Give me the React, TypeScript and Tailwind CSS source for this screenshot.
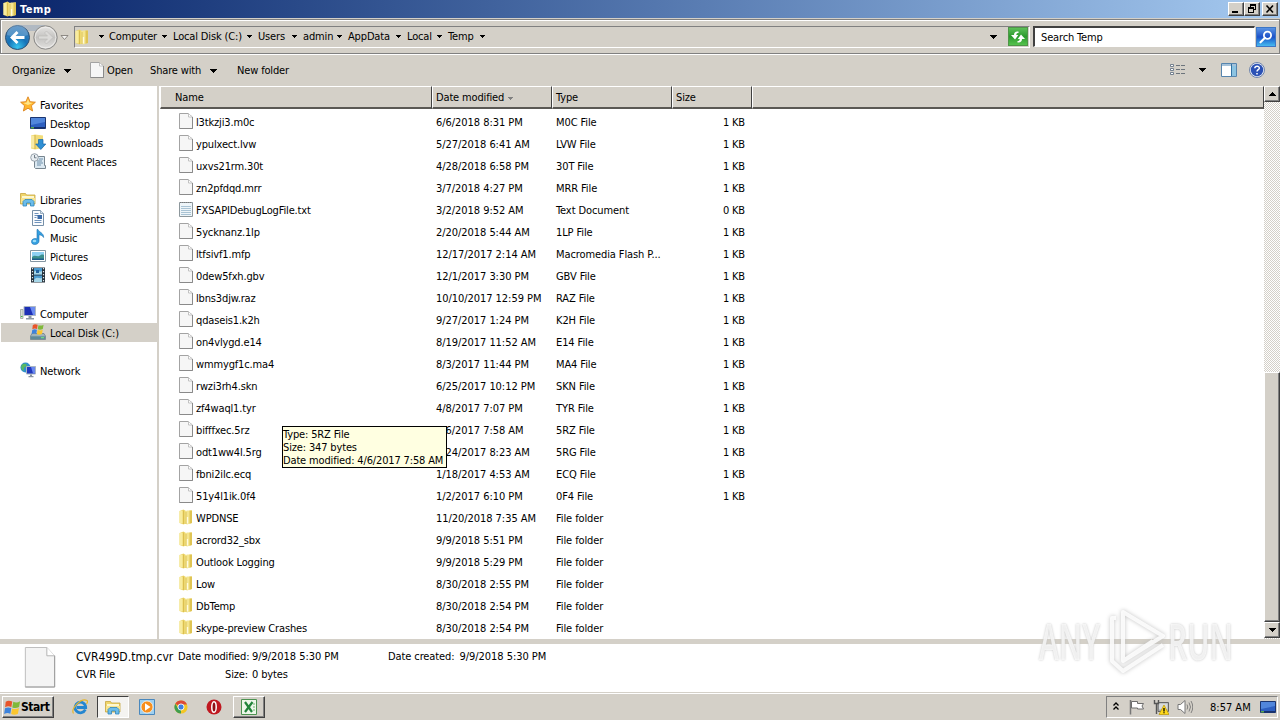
import React from "react";

type IconProps = { className?: string };

const FileIcon = ({ className = "w-4 h-4" }: IconProps) => (
  <svg viewBox="0 0 16 16" className={className}>
    <path d="M1.500.5h8.500L14.500 4v11.500H1.500z" fill="#f6f6f6" stroke="#a3a3a3" />
    <path d="M14.500 4v11.500H1.500" fill="none" stroke="#8a8a8a" />
    <path d="M10.500.8V4h3.500" fill="#fff" stroke="#b5b5b5" strokeWidth=".8" />
  </svg>
);

const TextIcon = () => (
  <svg viewBox="0 0 16 16" className="w-4 h-4">
    <path d="M1.500 1.500h13v14H1.500z" fill="#eef5f9" stroke="#8d979c" />
    <path d="M2 1.500h12" stroke="#777" strokeDasharray="1 1" />
    <path d="M3 5.500h10M3 7.500h10M3 9.500h10M3 11.500h10M3 13.500h10" stroke="#a9c3d4" />
  </svg>
);

const FolderIcon = ({ className = "w-4 h-4" }: IconProps) => (
  <svg viewBox="0 0 16 16" className={className}>
    <path d="M1.500 2 5.500.5 8 2v12.500L5.500 15.500 1.500 14z" fill="#eed86f" />
    <path d="M1.500 2h3v12h-3z" fill="#f8ec9f" />
    <path d="M7 2.500 9 1.500h5V14l-5 1.500-2-1z" fill="#f4e58f" />
    <path d="M11.500 1.500H14V14l-2.500.8z" fill="#dfc454" />
    <path d="M8 3v12M5.500 1.500v13.500" stroke="#d3b544" strokeWidth=".7" />
    <path d="M9.500 8v6.500" stroke="#fffbe0" strokeWidth="1.300" />
  </svg>
);

const StarIcon = () => (
  <svg viewBox="0 0 16 16" className="w-4 h-4">
    <path d="m8 .8 2.100 4.900 5.300.5-4 3.500 1.200 5.300L8 12.200 3.400 15l1.200-5.300-4-3.500 5.300-.5z" fill="#ffb62e" stroke="#dc8420" strokeWidth=".9" />
    <path d="m8 3 1.300 3.600 3.400.4L8 9 3.300 7l3.400-.4z" fill="#ffe68a" />
  </svg>
);

const DesktopIcon = () => (
  <svg viewBox="0 0 16 16" className="w-4 h-4">
    <path d="M.5 2.500h15v11H.5z" fill="#2d5fc0" stroke="#1b3570" />
    <path d="M1 3h14v4L1 10z" fill="#5d93e4" opacity=".75" />
    <path d="M1 12h14v1.500H1z" fill="#17306c" />
    <path d="M1 12h3v1.500H1z" fill="#5aa84d" />
  </svg>
);

const DownloadsIcon = () => (
  <svg viewBox="0 0 16 16" className="w-4 h-4">
    <path d="M1 1.500 5 .5l8 1V14l-8 1.500-4-1z" fill="#f1dc7a" />
    <path d="M1 2h3.500v12L1 13.500z" fill="#f9eba5" />
    <path d="M5 1v14" stroke="#caa73b" strokeWidth=".8" />
    <path d="M8.500 5.500h4.500V10h2.800L10.800 15.500 5.700 10h2.800z" fill="#2e8fd4" stroke="#1566a8" strokeWidth=".7" />
  </svg>
);

const RecentIcon = () => (
  <svg viewBox="0 0 16 16" className="w-4 h-4">
    <path d="M4.500 3.500h10v9h1v3h-10l-1-1z" fill="#dbe8f1" stroke="#77858f" />
    <path d="M9 6h4M7 8h5M7 10h6M7 12h4" stroke="#6e90ab" />
    <circle cx="4.500" cy="4.500" r="3.800" fill="#e9eef2" stroke="#8d99a3" strokeWidth=".9" />
    <path d="M4.500 2v2.800h2" fill="none" stroke="#53616c" strokeWidth=".8" />
  </svg>
);

const LibraryIcon = () => (
  <svg viewBox="0 0 16 16" className="w-4 h-4">
    <path d="M.5 2.500h5l1 1.500h8.500v9H.5z" fill="#efd56c" stroke="#c7a53d" strokeWidth=".8" />
    <path d="M2 5h12v2H2z" fill="#fdf7d0" />
    <path d="M1 7h14v5H1z" fill="#f7e48f" />
    <path d="M3 15v-4.500L5 8.500h7l2 2V15h-3.500v-3h-4v3z" fill="#6bbcea" stroke="#2f85bd" strokeWidth=".8" />
  </svg>
);

const DocumentIcon = () => (
  <svg viewBox="0 0 16 16" className="w-4 h-4">
    <path d="M2.500.5h8l3 3v12h-11z" fill="#fafcfe" stroke="#7790a8" />
    <path d="M10.500.5v3h3" fill="#dbe6ef" stroke="#7790a8" strokeWidth=".7" />
    <path d="M4.500 3.500h4M4.500 5.500h4M4.500 10.500h7M4.500 12.500h7" stroke="#6f93bc" />
    <path d="M7.500 5h4.500v4H7.500z" fill="#3b6ba8" />
    <path d="M4.500 7.500h2" stroke="#6f93bc" />
  </svg>
);

const MusicIcon = () => (
  <svg viewBox="0 0 16 16" className="w-4 h-4">
    <path d="M8 .5c.8 2.600 6 3.500 5.600 8-1-2-3-2.500-4.600-2.800V12c0 2-1.800 3.500-4.200 3.500S1.500 14.300 1.500 12.500 3 9.600 5 9.600c.9 0 1.500.1 2 .3V.5z" fill="#35a0e0" stroke="#1b6fb0" strokeWidth=".6" />
    <ellipse cx="4.500" cy="12" rx="1.800" ry="1.200" fill="#9bdcf8" />
  </svg>
);

const PicturesIcon = () => (
  <svg viewBox="0 0 16 16" className="w-4 h-4">
    <path d="M.5 2.500h15v11H.5z" fill="#fff" stroke="#8596a2" />
    <path d="M2 4h12v8H2z" fill="#8ed0f2" />
    <path d="M2 9c3-3 5 0 7-1s3-2 5-1v5H2z" fill="#3c8f8c" />
    <path d="M2 10.500h12V12H2z" fill="#1d5c8c" />
  </svg>
);

const VideosIcon = () => (
  <svg viewBox="0 0 16 16" className="w-4 h-4">
    <path d="M1 .5h14v15H1z" fill="#26323c" />
    <path d="M4 1h8v6.500H4zM4 8.500h8V15H4z" fill="#4b9bd0" />
    <path d="M4 5c3-3 5 1 8-1v3.500H4zM4 13c3-4 5-1 8-2v4H4z" fill="#a6d6e8" />
    <path d="M6 3h3v3H6z" fill="#2263a0" />
    <path d="M2.500 1v14M13.500 1v14" stroke="#dfe7ec" strokeWidth="1.200" strokeDasharray="1.200 1.800" />
  </svg>
);

const ComputerIcon = () => (
  <svg viewBox="0 0 16 16" className="w-4 h-4">
    <path d="M.5 4.500h2.500v9H.5z" fill="#d5dcd6" stroke="#9ba39e" strokeWidth=".8" />
    <path d="M1 11.500h1.500" stroke="#3eb73e" />
    <path d="M4 1.500h11.500v9H4z" fill="#1c2fb5" stroke="#aeb8c3" />
    <path d="M10 2h5v8h-2z" fill="#6a8af0" />
    <path d="M8.500 11h3v2h-3zM6 13h8v1.500H6z" fill="#8b97a4" />
  </svg>
);

const Flag = () => (
  <>
    <path d="M1.500 2.500C3.500 1 5 1.400 7.300 2.200L6.500 7C4.500 6.200 3 6 1 7.300z" fill="#e8542a" />
    <path d="M8.200 2.500c2 .8 4 .7 6-.5l-.9 5c-2 1.200-4 1.200-6 .4z" fill="#80b93a" />
    <path d="M.9 8.200c2-1.200 3.500-1 5.500-.3l-.8 4.900c-2-.9-3.500-.8-5.500.4z" fill="#3d83dc" />
    <path d="M7.200 8.300c2 .8 4 .8 6-.4l-.9 5c-2 1.100-4 1.100-6 .3z" fill="#fbc62e" />
  </>
);

const DiskIcon = () => (
  <svg viewBox="0 0 16 16" className="w-4 h-4">
    <path d="M2 9.500h12l1.500 2.500v3.500H.5V12z" fill="#9fb3bb" stroke="#5b6f78" strokeWidth=".6" />
    <path d="M.8 12.300h14.400v2.900H.8z" fill="#5f8a98" />
    <path d="M11 13.700h3" stroke="#73f07a" />
    <g transform="translate(1.500 -1) scale(.85)"><Flag /></g>
  </svg>
);

const NetworkIcon = () => (
  <svg viewBox="0 0 16 16" className="w-4 h-4">
    <circle cx="5.500" cy="5.500" r="5" fill="#2f8fcc" />
    <path d="M2 2.500c2-1 4-1 5 .5L5.500 5 4 5.500 3.500 9C1 7.500.5 4.500 2 2.500z" fill="#58b961" />
    <path d="M6.500 4.500h9v7.500h-9z" fill="#2138bd" stroke="#a9b5c2" />
    <path d="M11 5h4v6.500h-2z" fill="#6887ef" />
    <path d="M10 12.500h2v1.500h-2zM8.500 14h5v1.300h-5z" fill="#8793a0" />
  </svg>
);

const Caret = ({ className = "w-[7px] h-1" }: IconProps) => (
  <svg viewBox="0 0 7 4" className={className} shapeRendering="crispEdges">
    <path d="M0 0h7L3.500 4z" fill="currentColor" />
  </svg>
);

const SmallCaret = () => (
  <svg viewBox="0 0 5 3" className="w-[5px] h-[3px]" shapeRendering="crispEdges">
    <path d="M0 0h5v1H0zM1 1h3v1H1zM2 2h1v1H2z" fill="#000" />
  </svg>
);

const raised =
  "bg-[#d4d0c8] border border-t-white border-l-white border-r-[#404040] border-b-[#404040] shadow-[inset_-1px_-1px_0_#808080]";

function TitleBar() {
  const btn = `${raised} flex h-[14px] w-4 items-center justify-center`;
  return (
    <header className="flex h-[18px] shrink-0 items-center bg-linear-to-r from-[#0a246a] to-[#a6caf0] pl-[2px] pr-[2px]">
      <FolderIcon className="h-4 w-4" />
      <span className="ml-[2px] pt-px text-[11px] font-bold tracking-[0.5px] text-white">Temp</span>
      <div className="ml-auto flex">
        <div className={btn}>
          <svg viewBox="0 0 10 10" className="size-[10px]" shapeRendering="crispEdges"><path d="M1 7h6v2H1z" /></svg>
        </div>
        <div className={btn}>
          <svg viewBox="0 0 10 10" className="size-[10px]" shapeRendering="crispEdges">
            <path d="M3 0h6v6H7V5h1V2H4v1H3zM1 3h6v6H1zM2 5v3h4V5z" fillRule="evenodd" />
          </svg>
        </div>
        <div className={`${btn} ml-[2px]`}>
          <svg viewBox="0 0 10 10" className="size-[10px]"><path d="m1.500 1.500 6.500 7M8 1.500l-6.500 7" stroke="#000" strokeWidth="1.600" /></svg>
        </div>
      </div>
    </header>
  );
}

function NavBar() {
  const crumbs: [string, string][] = [
    ["Computer", "w-16"],
    ["Local Disk (C:)", "w-[85px]"],
    ["Users", "w-[45px]"],
    ["admin", "w-[45px]"],
    ["AppData", "w-[59px]"],
    ["Local", "w-[41px]"],
    ["Temp", "w-[43px]"],
  ];
  return (
    <nav className="mt-px flex h-[35px] shrink-0 items-center border border-[#808080] pl-1 shadow-[inset_1px_1px_0_#fff,0_1px_0_#fff]">
      <svg viewBox="0 0 66 30" className="h-[30px] w-[66px] shrink-0">
        <defs>
          <radialGradient id="back" cx=".5" cy=".9" r=".9">
            <stop offset="0" stopColor="#37c4ef" />
            <stop offset=".45" stopColor="#1673b8" />
            <stop offset="1" stopColor="#4a83ba" />
          </radialGradient>
          <linearGradient id="fwd" x2="0" y2="1">
            <stop offset="0" stopColor="#e6e5e3" />
            <stop offset=".5" stopColor="#c4c3c1" />
            <stop offset="1" stopColor="#e2e1df" />
          </linearGradient>
        </defs>
        <path d="M12 3h28v6H12z" fill="#b1b9c2" />
        <circle cx="12.500" cy="15.500" r="12" fill="url(#back)" stroke="#315273" />
        <path d="M2 13a10.500 10.500 0 0 1 21 0c-7 3-14 2-21 0z" fill="#a9cce8" opacity=".35" />
        <path d="M5 15.500 11.500 9l2 2-3 3h9v3h-9l3 3-2 2z" fill="#fff" />
        <circle cx="40.500" cy="15.500" r="11.700" fill="url(#fwd)" stroke="#8a8987" />
        <circle cx="40.500" cy="15.500" r="10.300" fill="none" stroke="#f5f4f2" opacity=".7" />
        <path d="M48 15.500 41.500 9l-2 2 3 3h-9v3h9l-3 3 2 2z" fill="#dbdad8" stroke="#bab9b7" strokeWidth=".6" />
        <path d="M56 13.500h7L59.500 17.500z" fill="#f4f3f1" stroke="#77746f" strokeWidth=".8" />
      </svg>
      <div className="ml-[3px] flex h-[22px] w-[956px] items-center border border-[#808080] border-b-white border-r-white">
        <FolderIcon className="-ml-px h-4 w-4" />
        <div className="ml-[9px] flex w-[10px] justify-start"><SmallCaret /></div>
        {crumbs.map(([name, width]) => (
          <div key={name} className={`flex items-center justify-between pr-[6px] ${width}`}>
            <span>{name}</span>
            <SmallCaret />
          </div>
        ))}
        <div className="ml-auto flex items-center text-black">
          <Caret />
          <div className="ml-[11px] mr-px flex h-[19px] w-5 items-center justify-center border border-[#4f9548] bg-linear-to-b from-[#5cbf58] via-[#2b9a2d] to-[#55c24d]">
            <svg viewBox="0 0 16 14" className="h-[14px] w-4">
              <path d="M8.500 1.500C5.500 1 4 2.500 4 5H1l4 4.500L8.300 5H6.300c0-1.500.7-2 2.200-2zM7.500 12.500c3 .5 4.500-1 4.500-3.500h3l-4-4.500L7.700 9h2c0 1.500-.7 2-2.200 2z" fill="#fff" />
            </svg>
          </div>
        </div>
      </div>
      <div className="ml-[3px] flex h-[21px] w-[222px] items-center border-2 border-[#404040] border-b-white border-r-white border-b border-r bg-white pl-[6px] pt-px">
        Search Temp
      </div>
      <div className="ml-px flex h-5 w-5 items-center justify-center border border-[#3d76c4] bg-linear-to-b from-[#5a93e3] via-[#1e50c8] to-[#48b9ef]">
        <svg viewBox="0 0 16 16" className="h-4 w-4">
          <circle cx="9.500" cy="6.200" r="3.600" fill="none" stroke="#fff" strokeWidth="1.800" />
          <path d="m7 8.800-4.500 4.500" stroke="#fff" strokeWidth="2.200" strokeLinecap="round" />
        </svg>
      </div>
    </nav>
  );
}

function ToolBar() {
  return (
    <div className="flex h-[31px] shrink-0 items-center pl-3 pr-[15px]">
      <div className="flex w-[78px] items-center justify-between pr-[19px]"><span>Organize</span><Caret /></div>
      <FileIcon className="-ml-px -mt-px h-4 w-4" />
      <span className="ml-[2px] w-[43px]">Open</span>
      <div className="flex w-[87px] items-center justify-between pr-5"><span>Share with</span><Caret /></div>
      <span>New folder</span>
      <svg viewBox="0 0 16 14" className="-mt-px ml-auto h-[14px] w-4">
        <path d="M.5 1.500h3v2h-3zM.5 5.500h3v2h-3zM.5 9.500h3v2h-3z" fill="#fff" stroke="#667586" strokeWidth=".9" />
        <path d="M6 2.500h4M11 2.500h4M6 6.500h4M11 6.500h4M6 10.500h4M11 10.500h4" stroke="#6c747c" />
      </svg>
      <Caret className="-mt-px ml-[13px] h-1 w-[7px]" />
      <svg viewBox="0 0 16 14" className="-mt-px ml-[15px] h-[14px] w-4">
        <path d="M.5.5h15v13H.5z" fill="#fff" stroke="#5685ae" />
        <path d="M1 1h14v2H1z" fill="#a5c2da" />
        <path d="M10.500 3H15v10h-4.500z" fill="#8cc4e2" /><path d="M10.500 1v12" stroke="#3272a3" />
      </svg>
      <svg viewBox="0 0 16 16" className="-mt-px ml-3 h-4 w-4">
        <circle cx="8" cy="8" r="7.500" fill="#e8edf7" stroke="#7085ac" />
        <circle cx="8" cy="8" r="6.200" fill="#2b51b5" />
        <path d="M5.800 6.200C6 3.500 10.500 3.600 10.300 6.200 10.200 7.700 8 7.800 8 9.600M8 11v1.600" fill="none" stroke="#fff" strokeWidth="1.500" />
      </svg>
    </div>
  );
}

type SideItem = { label: string; icon: () => React.ReactElement; root?: boolean; selected?: boolean };

const groups: SideItem[][] = [
  [
    { label: "Favorites", icon: StarIcon, root: true },
    { label: "Desktop", icon: DesktopIcon },
    { label: "Downloads", icon: DownloadsIcon },
    { label: "Recent Places", icon: RecentIcon },
  ],
  [
    { label: "Libraries", icon: LibraryIcon, root: true },
    { label: "Documents", icon: DocumentIcon },
    { label: "Music", icon: MusicIcon },
    { label: "Pictures", icon: PicturesIcon },
    { label: "Videos", icon: VideosIcon },
  ],
  [
    { label: "Computer", icon: ComputerIcon, root: true },
    { label: "Local Disk (C:)", icon: DiskIcon, selected: true },
  ],
  [{ label: "Network", icon: NetworkIcon, root: true }],
];

function Sidebar() {
  return (
    <aside className="flex w-[157px] shrink-0 flex-col gap-[19px] bg-white pt-[9px]">
      {groups.map((group) => (
        <div key={group[0].label}>
          {group.map(({ label, icon: Icon, root, selected }) => (
            <div
              key={label}
              className={`flex h-[19px] items-center gap-1 ${root ? "pl-5" : selected ? "ml-px bg-[#d4d0c8] pl-[29px]" : "pl-[30px]"}`}
            >
              <span className="-mt-px"><Icon /></span>
              <span className="pt-[2px]">{label}</span>
            </div>
          ))}
        </div>
      ))}
    </aside>
  );
}

const files: [string, string, string, string][] = [
  ["l3tkzji3.m0c", "6/6/2018 8:31 PM", "M0C File", "1 KB"],
  ["ypulxect.lvw", "5/27/2018 6:41 AM", "LVW File", "1 KB"],
  ["uxvs21rm.30t", "4/28/2018 6:58 PM", "30T File", "1 KB"],
  ["zn2pfdqd.mrr", "3/7/2018 4:27 PM", "MRR File", "1 KB"],
  ["FXSAPIDebugLogFile.txt", "3/2/2018 9:52 AM", "Text Document", "0 KB"],
  ["5ycknanz.1lp", "2/20/2018 5:44 AM", "1LP File", "1 KB"],
  ["ltfsivf1.mfp", "12/17/2017 2:14 AM", "Macromedia Flash P...", "1 KB"],
  ["0dew5fxh.gbv", "12/1/2017 3:30 PM", "GBV File", "1 KB"],
  ["lbns3djw.raz", "10/10/2017 12:59 PM", "RAZ File", "1 KB"],
  ["qdaseis1.k2h", "9/27/2017 1:24 PM", "K2H File", "1 KB"],
  ["on4vlygd.e14", "8/19/2017 11:52 AM", "E14 File", "1 KB"],
  ["wmmygf1c.ma4", "8/3/2017 11:44 PM", "MA4 File", "1 KB"],
  ["rwzi3rh4.skn", "6/25/2017 10:12 PM", "SKN File", "1 KB"],
  ["zf4waql1.tyr", "4/8/2017 7:07 PM", "TYR File", "1 KB"],
  ["bifffxec.5rz", "4/6/2017 7:58 AM", "5RZ File", "1 KB"],
  ["odt1ww4l.5rg", "3/24/2017 8:23 AM", "5RG File", "1 KB"],
  ["fbni2ilc.ecq", "1/18/2017 4:53 AM", "ECQ File", "1 KB"],
  ["51y4l1ik.0f4", "1/2/2017 6:10 PM", "0F4 File", "1 KB"],
  ["WPDNSE", "11/20/2018 7:35 AM", "File folder", ""],
  ["acrord32_sbx", "9/9/2018 5:51 PM", "File folder", ""],
  ["Outlook Logging", "9/9/2018 5:29 PM", "File folder", ""],
  ["Low", "8/30/2018 2:55 PM", "File folder", ""],
  ["DbTemp", "8/30/2018 2:54 PM", "File folder", ""],
  ["skype-preview Crashes", "8/30/2018 2:54 PM", "File folder", ""],
];

function FileList() {
  const cell =
    "flex h-full items-center border-t border-l border-white border-r border-r-[#404040] border-b-2 border-b-[#5a5854] pt-[2px]";
  return (
    <main className="relative flex min-w-0 flex-1 flex-col bg-white">
      <div className="flex h-[23px] shrink-0 bg-[#d4d0c8]">
        <div className={`${cell} w-[272px] pl-[14px]`}>Name</div>
        <div className={`${cell} w-[120px] gap-[4px] pl-[3px]`}>
          Date modified <span className="text-[#808080]"><Caret className="h-[3px] w-[5px]" /></span>
        </div>
        <div className={`${cell} w-[120px] pl-[3px]`}>Type</div>
        <div className={`${cell} w-20 pl-[3px]`}>Size</div>
        <div className={`${cell} flex-1`} />
      </div>
      <div className="pt-[2px]">
        {files.map(([name, date, type, size]) => (
          <div key={name} className="flex h-[22px] items-center pl-[18px]">
            <span className="-mt-[2px]">
              {type === "File folder" ? <FolderIcon /> : type === "Text Document" ? <TextIcon /> : <FileIcon />}
            </span>
            <span className="ml-[2px] w-60 pt-px">{name}</span>
            <span className="w-[120px] pt-px tracking-[-0.05px]">{date}</span>
            <span className="w-[120px] pt-px tracking-[-0.1px]">{type}</span>
            <span className="w-[69px] pt-px text-right">{size}</span>
          </div>
        ))}
      </div>
      <div className="absolute left-[122px] top-[340px] h-[42px] w-[165px] border border-black bg-[#ffffe1] pt-px leading-[13px]">
        <p>Type: 5RZ File</p>
        <p>Size: 347 bytes</p>
        <p className="tracking-[-0.15px]">Date modified: 4/6/2017 7:58 AM</p>
      </div>
    </main>
  );
}

function ScrollBar() {
  const btn = `${raised} flex h-4 shrink-0 items-center justify-center`;
  return (
    <div className="flex w-4 shrink-0 flex-col bg-[repeating-conic-gradient(#fff_0_25%,#d4d0c8_0_50%)] bg-size-[2px_2px] pb-px">
      <div className={btn}><span className="rotate-180"><Caret className="block h-1 w-[7px]" /></span></div>
      <div className={`${raised} mt-auto h-[250px]`} />
      <div className={btn}><Caret /></div>
    </div>
  );
}

function Details() {
  return (
    <section className="flex h-12 shrink-0 bg-white pl-6">
      <svg viewBox="0 0 32 42" className="mt-[3px] h-[41px] w-8">
        <path d="M1 .5h22L31 9v32H1z" fill="#f4f4f4" stroke="#bdbdbd" />
        <path d="M31 9v32H1" fill="none" stroke="#9b9b9b" />
        <path d="M23 .5V9h8" fill="#fff" stroke="#b3b3b3" />
      </svg>
      <div className="ml-5 w-[102px] pt-1 leading-[18px]">
        <p className="whitespace-nowrap text-[12px] tracking-[0.05px]">CVR499D.tmp.cvr</p>
        <p>CVR File</p>
      </div>
      <div className="grid w-[210px] grid-cols-[70px_1fr] content-start gap-x-1 whitespace-nowrap pt-1 leading-[18px]">
        <span className="text-right">Date modified:</span>
        <span className="tracking-[-0.05px]">9/9/2018 5:30 PM</span>
        <span className="text-right">Size:</span>
        <span>0 bytes</span>
      </div>
      <div className="flex gap-[5px] pt-1 leading-[18px]">
        <span className="tracking-[-0.1px]">Date created:</span>
        <span className="tracking-[-0.05px]">9/9/2018 5:30 PM</span>
      </div>
    </section>
  );
}

function TaskBar() {
  const slot = "flex h-[22px] w-8 items-center justify-center";
  return (
    <footer className="flex h-[28px] shrink-0 items-center border-t border-[#d4d0c8] bg-[#d4d0c8] pl-[2px] pr-[2px] pt-px shadow-[inset_0_1px_0_#fff]">
      <div className={`${raised} flex h-[22px] w-[52px] items-center pl-px`}>
        <svg viewBox="0 0 15 14" className="h-4 w-[17px]" preserveAspectRatio="none"><Flag /></svg>
        <span className="text-[12px] font-bold tracking-[-0.45px]">Start</span>
      </div>
      <div className={`${slot} ml-[10px]`}>
        <svg viewBox="0 0 16 16" className="h-4 w-4">
          <path d="M13.300 10.500A5.300 5.300 0 1 1 13.700 8.500H5" fill="none" stroke="#2486d0" strokeWidth="2.800" />
          <path d="M1.500 14.500C-1.500 10 9-1.500 15 1.500c1 1 .3 2.500-.5 3.500" fill="none" stroke="#e5b52c" strokeWidth="1.200" />
        </svg>
      </div>
      <div className={`${slot} ml-px border border-[#404040] border-r-white border-b-white bg-[#f4f3f0]`}><LibraryIcon /></div>
      <div className={`${slot} ml-[2px]`}>
        <svg viewBox="0 0 16 16" className="h-4 w-4">
          <path d="M.5.500h15v15H.5z" fill="#9ed0f0" stroke="#4a88bd" />
          <circle cx="8" cy="8" r="6" fill="#f78f1e" stroke="#fff" strokeWidth=".7" />
          <path d="M6 4.300 11.500 8 6 11.700z" fill="#fff" />
        </svg>
      </div>
      <div className={`${slot} ml-[2px]`}>
        <svg viewBox="0 0 16 16" className="h-[14px] w-[14px]">
          <circle cx="8" cy="8" r="7.500" fill="#f3c623" />
          <path d="M8 8 1.500 4.250A7.500 7.500 0 0 1 14.800 5H8z" fill="#dc4a38" />
          <path d="M8 8v7.500A7.500 7.500 0 0 1 1.500 4.250L5 10z" fill="#3f9d50" />
          <circle cx="8" cy="8" r="3.500" fill="#3f7fe0" stroke="#fff" />
        </svg>
      </div>
      <div className={`${slot} ml-px`}>
        <svg viewBox="0 0 16 16" className="h-4 w-4">
          <circle cx="8" cy="8" r="7.500" fill="#c01820" />
          <ellipse cx="8" cy="8" rx="2.200" ry="5.300" fill="#8f1015" stroke="#fff" strokeWidth="1.500" />
        </svg>
      </div>
      <div className={`${raised} ${slot} ml-[3px]`}>
        <svg viewBox="0 0 16 16" className="h-4 w-4">
          <path d="M.5.500h15v15H.5z" fill="#eef7ea" stroke="#4c9250" />
          <path d="m4 3 7 10M11.500 3 4 13" stroke="#22843a" strokeWidth="2.200" />
          <path d="M12 5h2M12 8h2M12 11h2" stroke="#6db36e" />
        </svg>
      </div>
      <div className="ml-auto flex h-[22px] w-[172px] items-center border border-[#808080] border-b-white border-r-white pl-[6px]">
        <svg viewBox="0 0 6 9" className="-mt-[2px] h-[9px] w-[6px]"><path d="M.5 3.500 3 1l2.500 2.500M.5 7.500 3 5l2.500 2.500" fill="none" stroke="#000" strokeWidth="1.300" /></svg>
        <svg viewBox="0 0 16 16" className="ml-[10px] h-4 w-4">
          <path d="M1.500 1v14.500" stroke="#777" strokeWidth="1.500" />
          <path d="M2.500 2.500h6v2h6L13 7l1.500 3h-6V9h-6z" fill="#fff" stroke="#6d6d6d" />
        </svg>
        <svg viewBox="0 0 16 16" className="ml-2 h-4 w-4">
          <path d="M5 3.500h10.500v9H5z" fill="#a8adb0" stroke="#666" /><path d="M6 4.500h8.500v6H6z" fill="#d8dadb" />
          <path d="M1.500 1v3.500h4V1M3.500 4v11" fill="none" stroke="#555" strokeWidth="1.400" />
          <path d="m11 6 5 9.500H6z" fill="#ffd91c" stroke="#b89500" strokeWidth=".7" /><path d="M11 9v3.500M11 13.300v1" stroke="#000" strokeWidth="1.300" />
        </svg>
        <svg viewBox="0 0 16 16" className="ml-2 h-4 w-4">
          <path d="M1 5.500h2.500L8 1.500v13l-4.500-4H1z" fill="#fff" stroke="#777" />
          <path d="M10 5.500q1.500 2.500 0 5M12 3.500q3 4.500 0 9M14 2q3.500 6 0 12" fill="none" stroke="#777" strokeWidth=".9" />
        </svg>
        <span className="ml-[17px] pt-px tracking-normal">8:57 AM</span>
        <span className="ml-auto mr-[1px]"><DesktopIcon /></span>
      </div>
    </footer>
  );
}

function Watermark() {
  return (
    <div className="absolute left-[1039px] top-[604px] flex h-[70px] w-[196px] items-center font-['Open_Sans','Liberation_Sans',sans-serif] text-[50px] font-semibold leading-none tracking-normal text-white/75 [text-shadow:0_0_3px_#c0c0c0]">
      <span className="w-[66px] origin-left scale-x-[.6] pt-1">ANY</span>
      <svg viewBox="0 0 60 70" className="h-[70px] w-[60px] shrink-0 overflow-visible drop-shadow-[0_0_2px_#b8b8b8]">
        <path d="M18 8 58 32 18 57zM18 8v33M11 14H7v43l11 10 40-26M18 57 48 37" fill="none" stroke="#fff" strokeOpacity=".85" strokeWidth="4" strokeLinejoin="round" />
      </svg>
      <span className="ml-[3px] w-[64px] origin-left scale-x-[.6] pt-1">RUN</span>
    </div>
  );
}

export default function App() {
  return (
    <div className="relative flex h-[720px] w-[1280px] flex-col overflow-hidden whitespace-nowrap bg-[#d4d0c8] font-['DejaVu_Sans_Condensed','DejaVu_Sans',sans-serif] text-[11px] leading-[14px] tracking-[-0.15px] text-black">
      <TitleBar />
      <NavBar />
      <div className="h-px shrink-0" />
      <ToolBar />
      <div className="flex h-[553px] shrink-0">
        <Sidebar />
        <div className="w-[3px] shrink-0 border-r border-white bg-[#d4d0c8]" />
        <FileList />
        <ScrollBar />
      </div>
      <div className="h-[5px] shrink-0" />
      <Details />
      <TaskBar />
      <Watermark />
    </div>
  );
}
